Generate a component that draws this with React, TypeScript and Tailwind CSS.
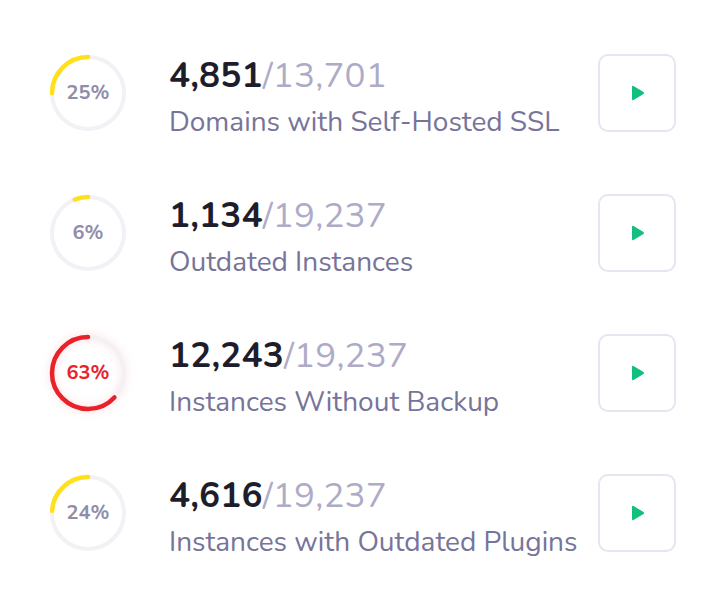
import React from 'react'

const ROWS = [
  { pct: 25, done: '4,851', total: '13,701', label: 'Domains with Self-Hosted SSL', danger: false },
  { pct: 6, done: '1,134', total: '19,237', label: 'Outdated Instances', danger: false },
  { pct: 63, done: '12,243', total: '19,237', label: 'Instances Without Backup', danger: true },
  { pct: 24, done: '4,616', total: '19,237', label: 'Instances with Outdated Plugins', danger: false },
]

function Ring({ pct, danger }: { pct: number; danger: boolean }) {
  const r = 36
  const c = 2 * Math.PI * r
  const color = danger ? '#e8212a' : '#ffe01a'
  return (
    <div className="relative h-[80px] w-[80px] shrink-0">
      <svg
        width="80"
        height="80"
        viewBox="0 0 80 80"
        className={danger ? 'drop-shadow-[0_0_4px_rgba(232,33,42,0.18)]' : ''}
      >
        <circle cx="40" cy="40" r={r} fill="none" stroke="#f1f1f6" strokeWidth="4" />
        <circle
          cx="40"
          cy="40"
          r={r}
          fill="none"
          stroke={color}
          strokeWidth="4.5"
          strokeLinecap="round"
          strokeDasharray={`${(c * pct) / 100} ${c}`}
          transform="translate(80 0) scale(-1 1) rotate(-90 40 40)"
        />
      </svg>
      <span
        className={`absolute inset-0 flex items-center justify-center text-[20px] font-bold ${
          danger ? 'text-[#e8212a]' : 'text-[#8f8da9]'
        }`}
      >
        {pct}%
      </span>
    </div>
  )
}

export default function App() {
  return (
    <div className="min-h-[608px] w-[724px] bg-white pt-[23px] font-['Nunito','Lato',sans-serif]">
      {ROWS.map((row) => (
        <div key={row.label} className="flex h-[140px] items-center pl-[48px] pr-[48px]">
          <Ring pct={row.pct} danger={row.danger} />
          <div className="ml-[41px] flex-1 pt-[9px]">
            <div className="text-[35px] leading-[40px] tracking-[0.2px]">
              <span className="font-bold text-[#1e1d2b]">{row.done}</span>
              <span className="text-[#aeabc7]">/{row.total}</span>
            </div>
            <div className="mt-[8px] text-[28px] leading-[36px] text-[#77749a]">{row.label}</div>
          </div>
          <button className="flex h-[78px] w-[78px] items-center justify-center rounded-[10px] border-2 border-[#e6e5f0] bg-white">
            <svg width="14" height="16" viewBox="0 0 14 16" className="ml-[1px]">
              <path
                d="M2.5 1 L12.5 7 Q13.5 8 12.5 9 L2.5 15 Q1 15.8 1 14 V2 Q1 0.2 2.5 1 Z"
                fill="#12bf7c"
              />
            </svg>
          </button>
        </div>
      ))}
    </div>
  )
}
